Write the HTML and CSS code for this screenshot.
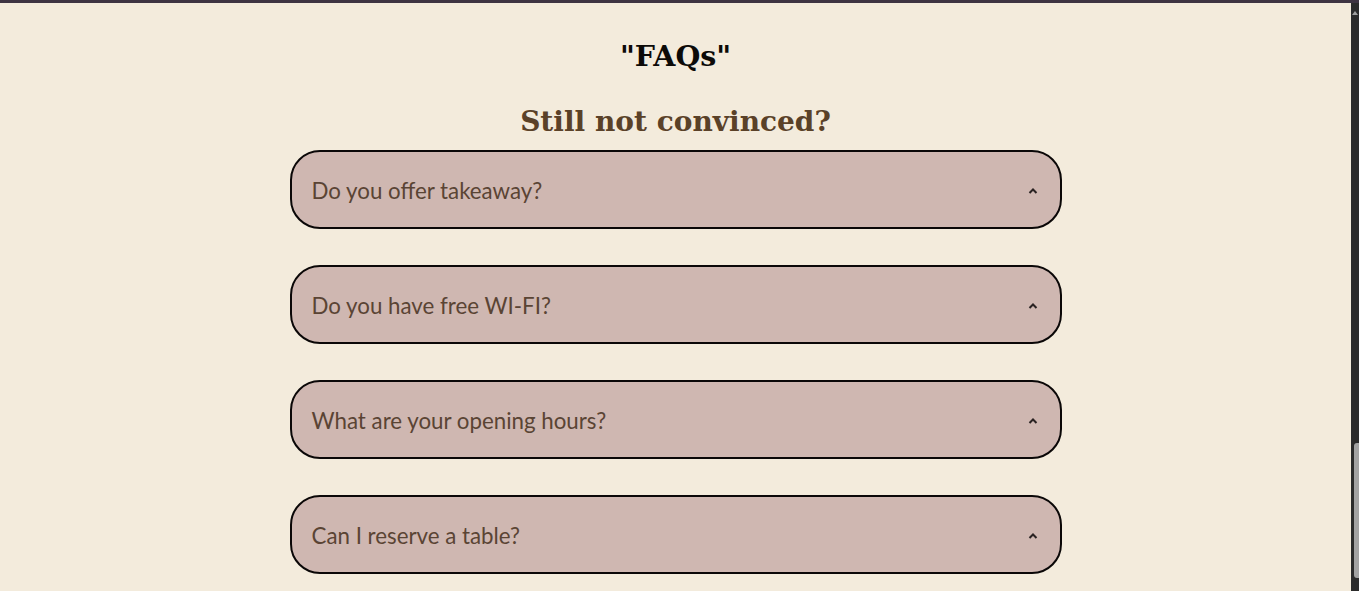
FILE: index.html
```html
<!DOCTYPE html>
<html lang="en">
<head>
<meta charset="utf-8">
<title>FAQs</title>
<link rel="stylesheet" href="styles.css">
</head>
<body>
<div class="topbar"></div>
<div class="page">
  <main class="content">
    <h2 class="faq-title">"FAQs"</h2>
    <h3 class="faq-sub">Still not convinced?</h3>
    <div class="faq-list">
      <div class="faq-item"><span class="q">Do you offer takeaway?</span><svg class="chev" viewBox="0 0 10 6" width="10" height="6"><polyline points="1.5,5 5,1.5 8.5,5" fill="none" stroke="#2a2222" stroke-width="2"/></svg></div>
      <div class="faq-item"><span class="q">Do you have free WI-FI?</span><svg class="chev" viewBox="0 0 10 6" width="10" height="6"><polyline points="1.5,5 5,1.5 8.5,5" fill="none" stroke="#2a2222" stroke-width="2"/></svg></div>
      <div class="faq-item"><span class="q">What are your opening hours?</span><svg class="chev" viewBox="0 0 10 6" width="10" height="6"><polyline points="1.5,5 5,1.5 8.5,5" fill="none" stroke="#2a2222" stroke-width="2"/></svg></div>
      <div class="faq-item"><span class="q">Can I reserve a table?</span><svg class="chev" viewBox="0 0 10 6" width="10" height="6"><polyline points="1.5,5 5,1.5 8.5,5" fill="none" stroke="#2a2222" stroke-width="2"/></svg></div>
    </div>
  </main>
  <div class="scrollbar"><div class="sb-arrow"></div><div class="sb-track"><div class="sb-thumb"></div></div></div>
</div>
</body>
</html>
```

FILE: styles.css
```css
html, body {
  margin: 0;
  padding: 0;
  height: 100%;
  overflow: hidden;
}
body {
  background: #f3ebdc;
  display: flex;
  flex-direction: column;
}
.topbar {
  height: 3px;
  background: #3e3442;
  flex: none;
}
.page {
  flex: 1;
  display: flex;
  min-height: 0;
}
.content {
  flex: 1;
  display: flex;
  flex-direction: column;
  align-items: center;
  padding-top: 33px;
}
.faq-title {
  margin: 0;
  font-family: "DejaVu Serif", serif;
  font-weight: bold;
  font-size: 28.5px;
  line-height: 40px;
  color: #0c0a08;
}
.faq-sub {
  margin: 26px 0 0;
  font-family: "DejaVu Serif", serif;
  font-weight: bold;
  font-size: 28px;
  line-height: 40px;
  color: #5a4128;
}
.faq-list {
  margin-top: 8px;
  display: flex;
  flex-direction: column;
  gap: 36px;
  width: 772px;
}
.faq-item {
  box-sizing: border-box;
  height: 79px;
  border: 2px solid #0a0707;
  border-radius: 30px;
  background: #cfb7b1;
  display: flex;
  align-items: center;
  justify-content: space-between;
  padding: 2px 22px 0 20px;
}
.q {
  font-family: "Lato", sans-serif;
  font-size: 22.3px;
  color: #5a4434;
}
.chev {
  display: block;
}
.scrollbar {
  width: 8px;
  flex: none;
  background: #2b2b2b;
  display: flex;
  flex-direction: column;
}
.sb-arrow {
  height: 12px;
  display: flex;
  justify-content: center;
  align-items: flex-end;
}
.sb-arrow::before {
  content: "";
  border-left: 3px solid transparent;
  border-right: 3px solid transparent;
  border-bottom: 4px solid #a0a0a0;
}
.sb-track {
  flex: 1;
  display: flex;
  flex-direction: column;
  justify-content: flex-end;
  padding: 0 0 13px 3px;
}
.sb-thumb {
  height: 135px;
  background: #a3a3a3;
  border-radius: 3px 0 0 3px;
}
```
